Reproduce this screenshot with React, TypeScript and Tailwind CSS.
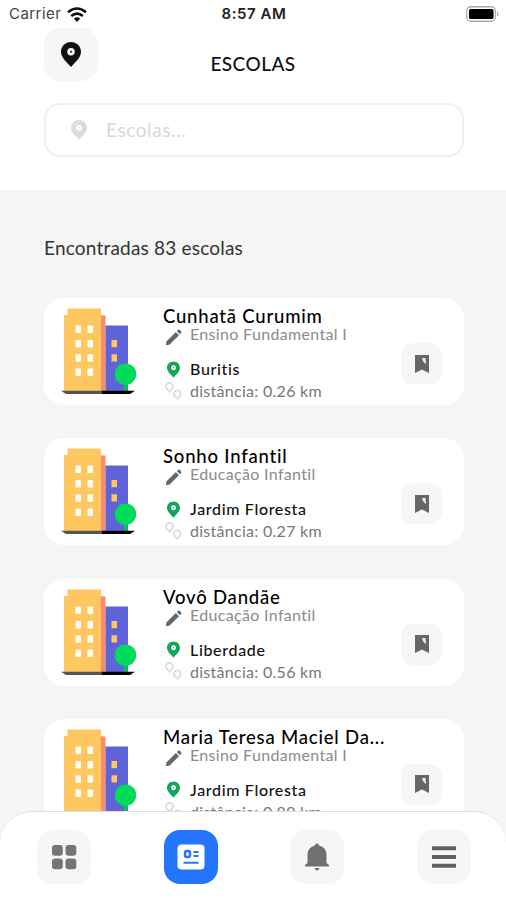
import type { ReactNode } from "react";

type School = { name: string; level: string; district: string; distance: string };

const schools: School[] = [
  { name: "Cunhatã Curumim", level: "Ensino Fundamental I", district: "Buritis", distance: "0.26" },
  { name: "Sonho Infantil", level: "Educação Infantil", district: "Jardim Floresta", distance: "0.27" },
  { name: "Vovô Dandãe", level: "Educação Infantil", district: "Liberdade", distance: "0.56" },
  { name: "Maria Teresa Maciel Da...", level: "Ensino Fundamental I", district: "Jardim Floresta", distance: "0.89" },
];

function Pin({ className, hole }: { className: string; hole: string }) {
  return (
    <svg viewBox="0 0 20 25" className={className}>
      <path fill="currentColor" d="M10 0C4.4 0 0 4.3 0 9.8C0 15.5 5 19.5 10 25C15 19.5 20 15.5 20 9.8C20 4.3 15.6 0 10 0Z" />
      <circle cx="10" cy="9.8" r="3.7" fill={hole} />
      <circle cx="10" cy="9.8" r="1" fill="currentColor" />
    </svg>
  );
}

function Building() {
  return (
    <svg viewBox="0 0 75 88" className="h-[88px] w-[75px] shrink-0">
      <path fill="#ffc75f" d="M6.5 0.5H40V7H42V83H3V7H6.5Z" />
      <path fill="#ff8a66" d="M40 7.5H44.5V83H40Z" />
      <path fill="#5f63d8" d="M44.500 17.500H67V83H44.500Z" />
      {[17.5, 32, 46.3, 60.5].map((y) => (
        <g key={y} fill="#fffdf5">
          <rect x="14.500" y={y} width="5.500" height="7.500" rx="1" />
          <rect x="26.500" y={y} width="5.500" height="7.500" rx="1" />
        </g>
      ))}
      <rect x="50.500" y="32" width="5.500" height="7.200" fill="#ffc75f" />
      <rect x="50.500" y="46.300" width="5.500" height="7.200" fill="#ffc75f" />
      <path fill="#00c853" d="M63 73H66.500V83H63Z" />
      <circle cx="64.500" cy="66.200" r="10.800" fill="#00dc5a" />
      <path fill="#555353" d="M0 82.700H42V86H5Z" />
      <path fill="#000" d="M41 82.700H74L69 86H41Z" />
    </svg>
  );
}

function Pencil() {
  return (
    <svg viewBox="0 0 18 18" className="mt-[2px] h-[17px] w-[17px]" fill="#666">
      <path d="M0.800 17.200L1.700 13L11.500 3.200L14.800 6.500L5 16.300Z" />
      <path d="M12.500 2.200L14.100 0.700Q14.800 0.200 15.500 0.900L17.100 2.500Q17.700 3.200 17.100 3.900L15.800 5.500Z" />
    </svg>
  );
}

function Route() {
  return (
    <svg viewBox="0 0 17 18" className="h-[18px] w-[17px]" fill="none" stroke="#dcdcdc" strokeWidth="1.800">
      <path d="M4.500 9.500C2.700 7.700 1 6.500 1 4.500A3.500 3.500 0 0 1 8 4.500C8 6.500 6.300 7.700 4.500 9.500Z" />
      <path d="M12.300 16.800C10.500 15 8.800 13.800 8.800 11.800A3.500 3.500 0 0 1 15.800 11.800C15.800 13.800 14.100 15 12.300 16.800Z" />
    </svg>
  );
}

function SchoolCard({ school }: { school: School }) {
  return (
    <article className="flex h-[107px] shrink-0 items-start rounded-[20px] bg-white pl-[17px] pt-[10px]">
      <Building />
      <div className="ml-[27px] -mt-[3px] w-[228px] shrink-0">
        <h2 className="whitespace-nowrap text-[18.5px] leading-[22px] font-medium tracking-[0.800px] text-black">{school.name}</h2>
        <div className="-mt-[2px] flex h-[18px] items-start">
          <span className="w-[27px] pl-[2px] pt-[2px]"><Pencil /></span>
          <span className="whitespace-nowrap text-[16px] leading-[17px] tracking-[0.330px] text-[#8b8b8b]">{school.level}</span>
        </div>
        <div className="mt-[15px] flex h-[22px] items-center">
          <span className="w-[27px] pl-[4px]"><Pin className="h-[17px] w-[13px] text-[#14a65c]" hole="#fff" /></span>
          <span className="whitespace-nowrap text-[16px] leading-[22px] font-medium tracking-[0.660px] text-[#111]">{school.district}</span>
        </div>
        <div className="flex h-[21px] items-center">
          <span className="w-[27px] pl-[2px]"><Route /></span>
          <span className="whitespace-nowrap text-[16px] leading-[21px] tracking-[0.280px] text-[#777]">distância: {school.distance} km</span>
        </div>
      </div>
      <button className="ml-[10px] mt-[35px] flex h-[41px] w-[41px] shrink-0 items-center justify-center rounded-[12px] bg-[#f6f6f6]">
        <svg viewBox="0 0 16 20" className="h-[20px] w-[16px]">
          <path fill="#666" d="M1 1H15V19L8 15.500L1 19Z" />
          <path fill="#eee" d="M8 4H11.500L12 10Q9 8.500 8 4Z" />
        </svg>
      </button>
    </article>
  );
}

function NavButton({ children, active = false }: { children: ReactNode; active?: boolean }) {
  return (
    <button className={`flex h-[54px] w-[54px] items-center justify-center rounded-[16px] ${active ? "bg-[#2575fc]" : "bg-[#f6f6f6]"}`}>
      {children}
    </button>
  );
}

export default function App() {
  return (
    <main className="flex h-[900px] w-[506px] flex-col overflow-hidden bg-[#f5f5f5] font-['Lato','Open_Sans',sans-serif]">
      <header className="h-[190px] shrink-0 bg-white">
        <div className="grid h-[28px] grid-cols-3 items-center pl-[9px] pr-[7px] font-['Inter','Roboto',sans-serif]">
          <div className="flex items-center gap-[6px] pt-px text-[15px] tracking-[0.450px] text-[#444]">
            <span>Carrier</span>
            <svg viewBox="0 0 20 15" className="h-[15px] w-[20px]" fill="none" stroke="#111" strokeWidth="2.600">
              <path d="M1 5.300Q10 -2.300 19 5.300M4.200 9Q10 4.200 15.800 9" />
              <path fill="#111" stroke="none" d="M6.800 11.500Q10 9 13.200 11.500L10 15Z" />
            </svg>
          </div>
          <span className="pt-px text-center text-[15px] font-semibold tracking-[0.550px] text-[#222]">8:57 AM</span>
          <svg viewBox="0 0 33 16" className="h-[16px] w-[33px] justify-self-end">
            <rect x="0.750" y="0.750" width="28.500" height="14.500" rx="4" fill="none" stroke="#aaa" strokeWidth="1.300" />
            <rect x="3" y="3" width="24.500" height="10" rx="1.500" fill="#000" />
            <path fill="#aaa" d="M31 5Q34 8 31 11Z" />
          </svg>
        </div>
        <div className="grid h-[53px] grid-cols-[54px_1fr_54px] px-[44px]">
          <button className="flex h-[53px] w-[54px] items-center justify-center rounded-[16px] bg-[#f6f6f6]">
            <Pin className="h-[25px] w-[20px] text-[#111]" hole="#fff" />
          </button>
          <h1 className="pt-[24px] text-center text-[19px] leading-[24px] font-medium tracking-[0.450px] text-[#111]">ESCOLAS</h1>
        </div>
        <div className="mx-[44px] mt-[22px] flex h-[54px] w-[420px] items-center rounded-[16px] border-2 border-[#f0f0f0] pl-[25px]">
          <Pin className="h-[20px] w-[16px] text-[#dcdcdc]" hole="#fff" />
          <span className="ml-[19px] text-[19px] leading-[24px] tracking-[0.600px] text-[#d8d8d8]">Escolas...</span>
        </div>
      </header>
      <section className="flex h-[621px] shrink-0 flex-col overflow-hidden pl-[44px] pr-[42px] pt-[46px]">
        <p className="h-[24px] shrink-0 whitespace-nowrap text-[19px] leading-[24px] tracking-[0.200px] text-[#333]">Encontradas 83 escolas</p>
        <div className="mt-[38px] flex flex-col gap-[33.300px]">
          {schools.map((school) => <SchoolCard key={school.name} school={school} />)}
        </div>
      </section>
      <nav className="flex h-[89px] shrink-0 items-start justify-between rounded-t-[32px] border-t border-[#dedede] bg-white pl-[37px] pr-[35px] pt-[18px]">
        <NavButton>
          <svg viewBox="0 0 26 26" className="h-[26px] w-[26px]" fill="#757575">
            <rect x="1" y="1" width="10.800" height="10.800" rx="3" />
            <rect x="14.500" y="1" width="10.800" height="10.800" rx="3" />
            <rect x="1" y="14.500" width="10.800" height="10.800" rx="3" />
            <rect x="14.500" y="14.500" width="10.800" height="10.800" rx="3" />
          </svg>
        </NavButton>
        <NavButton active>
          <svg viewBox="0 0 28 26" className="h-[26px] w-[28px]" fill="none" stroke="#2575fc" strokeWidth="2">
            <rect x="0.500" y="0.500" width="27" height="25" rx="4" fill="#fff" stroke="none" />
            <rect x="8" y="7" width="5" height="6" rx="2" strokeWidth="2.500" />
            <path d="M16.500 8H21.500M16.500 12H21.500M6.500 18.800H21.500" />
          </svg>
        </NavButton>
        <NavButton>
          <svg viewBox="0 0 26 28" className="h-[28px] w-[26px]" fill="#707070">
            <path d="M11 2.500Q11 0.500 13 0.500Q15 0.500 15 2.500Q22.500 4.500 22.500 12V20L25 22V23.500H1V22L3.500 20V12Q3.500 4.500 11 2.500Z" />
            <path d="M10.500 25H15.500Q15 27.500 13 27.500Q11 27.500 10.500 25Z" />
          </svg>
        </NavButton>
        <NavButton>
          <svg viewBox="0 0 26 24" className="h-[24px] w-[26px]" fill="#626262">
            <path d="M1 1.200H25V5.200H1ZM1 10H25V14H1ZM1 18.800H25V22.800H1Z" />
          </svg>
        </NavButton>
      </nav>
    </main>
  );
}
